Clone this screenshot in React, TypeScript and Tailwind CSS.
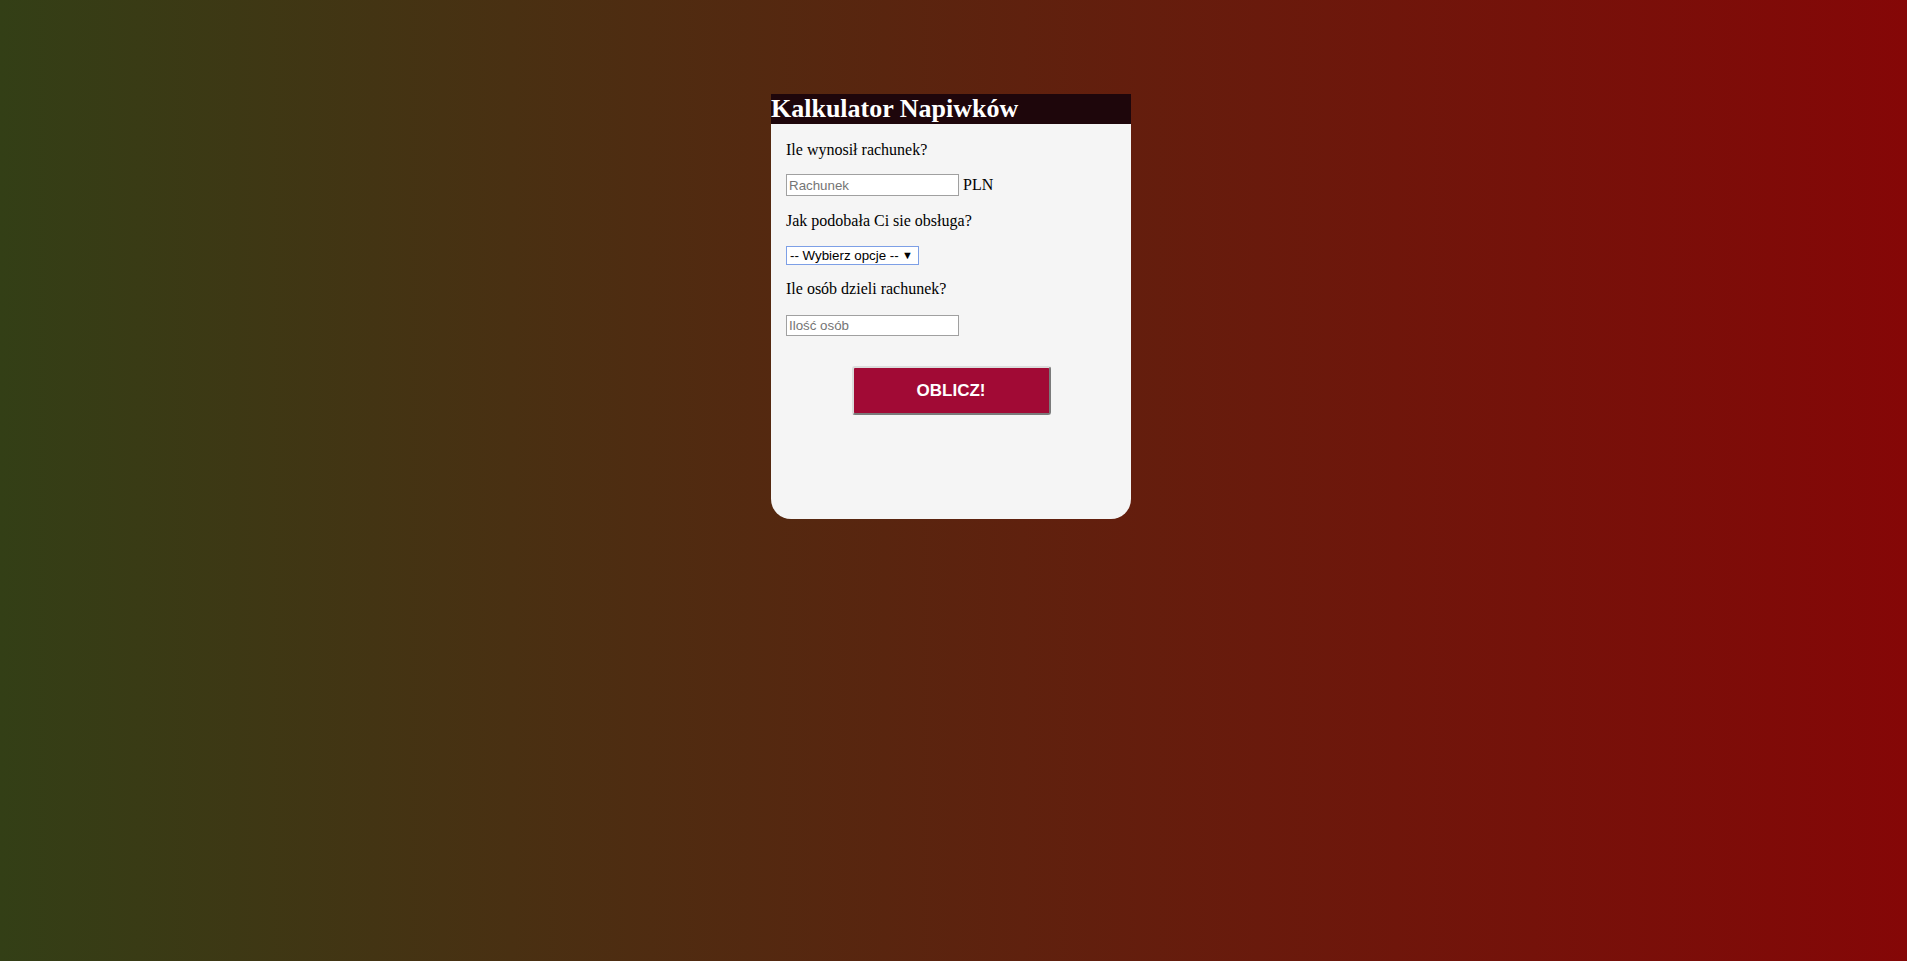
import React from 'react';

const serif = "font-['Liberation_Serif','Times_New_Roman',serif]";
const sans = "font-['Liberation_Sans',Arial,sans-serif]";

export default function App() {
  return (
    <div className="min-h-[961px] w-full bg-[linear-gradient(to_right,#333f16,#850707)] pt-[94px] pr-[5px]">
      <div className="mx-auto w-[360px] overflow-hidden rounded-b-[20px] bg-[#f5f5f5]">
        <h1 className={`${serif} h-[30px] bg-[#1e060b] text-[26px] font-bold leading-[30px] text-white`}>
          Kalkulator Napiwków
        </h1>

        <div className={`${serif} px-[15px] pt-[17px] pb-[104px] text-[16px] text-black`}>
          <p className="leading-[18px]">Ile wynosił rachunek?</p>

          <div className="mt-[15px] flex items-center">
            <input
              type="text"
              placeholder="Rachunek"
              className={`${sans} h-[22px] w-[173px] border border-[#a0a0a0] bg-white px-[2px] text-[13.33px] placeholder:text-[#757575] outline-none`}
            />
            <span className="ml-[4px] leading-[18px]">PLN</span>
          </div>

          <p className="mt-[16px] leading-[18px]">Jak podobała Ci sie obsługa?</p>

          <div
            className={`${sans} mt-[16px] flex h-[19px] w-[133px] items-center justify-between border border-[#7d9fe6] bg-white pl-[3px] pr-[5px] text-[13.33px] text-black`}
          >
            <span>-- Wybierz opcje --</span>
            <span className="text-[11px]">▼</span>
          </div>

          <p className="mt-[15px] leading-[18px]">Ile osób dzieli rachunek?</p>

          <input
            type="text"
            placeholder="Ilość osób"
            className={`${sans} mt-[17px] block h-[21px] w-[173px] border border-[#a0a0a0] bg-white px-[2px] text-[13.33px] placeholder:text-[#757575] outline-none`}
          />

          <div className="mt-[30px] flex justify-center">
            <button
              className={`${sans} h-[49px] w-[199px] rounded-[3px] border-2 border-t-[#dcdcdc] border-l-[#dcdcdc] border-r-[#7a7a7a] border-b-[#7a7a7a] bg-[#a10a35] text-[17px] font-bold text-white`}
            >
              OBLICZ!
            </button>
          </div>
        </div>
      </div>
    </div>
  );
}
